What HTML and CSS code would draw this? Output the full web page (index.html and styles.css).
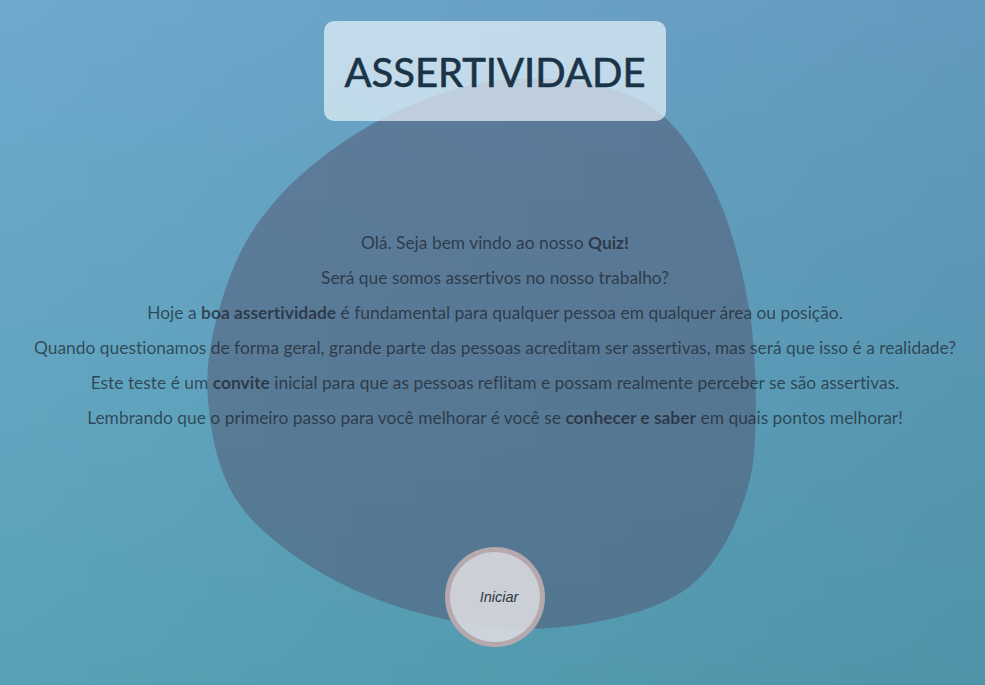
FILE: index.html
```html
<!DOCTYPE html>
<html lang="pt-BR">
<head>
<meta charset="utf-8">
<title>Assertividade</title>
<link rel="stylesheet" href="styles.css">
</head>
<body>
<main class="page">
  <svg class="blob" viewBox="0 0 985 685" width="985" height="685" aria-hidden="true">
    <path d="M510,79 C553.3,75.7 606.2,82 640,100 C673.8,118 694.7,150.3 713,187 C731.3,223.7 743.5,272.8 751,320 C756.5,367.2 758,426.7 752,470 C743.2,513.3 724,554.2 697,580 C670,605.8 627.8,616 590,623 C552.2,630 511.7,631 470,624 C428.3,617.3 378.3,602.8 340,583 C301.7,563.2 262,535.5 240,505 C218,474.5 211,434.2 208,400 C205,365.8 212,332.5 222,300 C232,267.5 245,236 272,205 C296,175 339.7,141 380,120 C420.3,99 466.7,82.3 510,79 Z" fill="rgba(82,84,112,0.5)"/>
  </svg>
  <header class="title-box">
    <h1 class="title">ASSERTIVIDADE</h1>
  </header>
  <section class="intro">
    <p>Olá. Seja bem vindo ao nosso <strong>Quiz!</strong></p>
    <p>Será que somos assertivos no nosso trabalho?</p>
    <p>Hoje a <strong>boa assertividade</strong> é fundamental para qualquer pessoa em qualquer área ou posição.</p>
    <p>Quando questionamos de forma geral, grande parte das pessoas acreditam ser assertivas, mas será que isso é a realidade?</p>
    <p>Este teste é um <strong>convite</strong> inicial para que as pessoas reflitam e possam realmente perceber se são assertivas.</p>
    <p>Lembrando que o primeiro passo para você melhorar é você se <strong>conhecer e saber</strong> em quais pontos melhorar!</p>
  </section>
  <button class="start" type="button">Iniciar</button>
</main>
</body>
</html>
```

FILE: styles.css
```css
html, body {
  margin: 0;
  padding: 0;
}

body {
  width: 985px;
  height: 685px;
  overflow: hidden;
  font-family: Lato, "Open Sans", sans-serif;
  background:
    linear-gradient(to right, rgba(0, 20, 50, 0) 0%, rgba(0, 20, 50, 0.1) 100%),
    linear-gradient(to bottom, #6fa9cd 0%, #57a2b6 100%);
}

.page {
  position: relative;
  box-sizing: border-box;
  height: 685px;
  padding-left: 5px;
  display: flex;
  flex-direction: column;
  align-items: center;
}

.blob {
  position: absolute;
  left: 0;
  top: 0;
  z-index: 0;
}

.title-box {
  position: relative;
  z-index: 2;
  margin-top: 21px;
  height: 100px;
  width: 342px;
  box-sizing: border-box;
  display: flex;
  align-items: center;
  justify-content: center;
  border-radius: 10px;
  background: rgba(232, 242, 250, 0.7);
}

.title {
  margin: 0;
  font-family: Lato, sans-serif;
  font-weight: 400;
  font-size: 40px;
  color: #1b3346;
  -webkit-text-stroke: 0.6px #1b3346;
  padding-top: 1px;
}

.intro {
  position: relative;
  z-index: 1;
  margin-top: 111px;
  display: flex;
  flex-direction: column;
  align-items: center;
  gap: 14px;
  text-align: center;
  font-size: 17.4px;
  line-height: 21px;
  font-variant-ligatures: none;
  color: rgba(22, 24, 34, 0.66);
}

.intro p {
  margin: 0;
  white-space: nowrap;
}

.intro strong {
  font-weight: 700;
}

.start {
  position: relative;
  z-index: 2;
  margin-top: 119px;
  width: 100px;
  height: 100px;
  box-sizing: border-box;
  border-radius: 50%;
  border: 5px solid rgba(180, 166, 172, 0.95);
  background: rgba(224, 222, 226, 0.86);
  font-family: "Liberation Sans", Arial, sans-serif;
  font-style: italic;
  font-size: 14.5px;
  color: #2c3848;
  padding: 0 0 0 8px;
}
```
